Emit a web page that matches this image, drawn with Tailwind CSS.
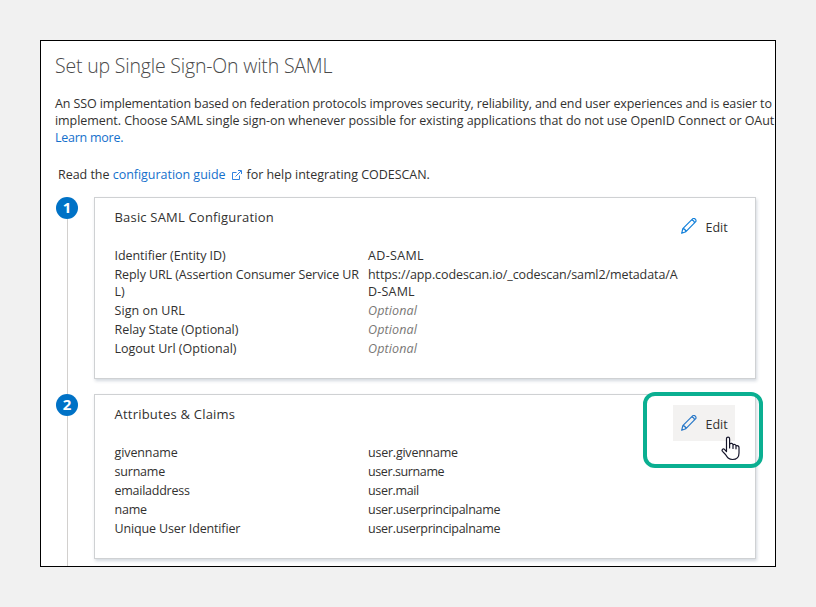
<!DOCTYPE html>
<html lang="en">
<head>
<meta charset="utf-8">
<title>Set up Single Sign-On with SAML</title>
<script src="https://cdn.jsdelivr.net/npm/@tailwindcss/browser@4"></script>
</head>
<body class="bg-[#f1f1f1] w-[816px] h-[607px] overflow-hidden pl-10 pt-10 font-['Open_Sans','Noto_Sans',sans-serif] text-[12.5px] leading-[17px] text-[#323130]">
<main class="relative w-[736px] h-[527px] bg-white border border-black overflow-hidden pl-[14px] pt-[11px]">
  <h1 class="h-[28px] leading-[28px] text-[19.5px] font-light text-[#4a4a4a] whitespace-nowrap tracking-[-0.19px]">Set up Single Sign-On with SAML</h1>
  <div class="mt-[15px] whitespace-nowrap">
    <div class="tracking-[-0.12px]">An SSO implementation based on federation protocols improves security, reliability, and end user experiences and is easier to</div>
    <div class="tracking-[-0.055px]">implement. Choose SAML single sign-on whenever possible for existing applications that do not use OpenID Connect or OAut</div>
    <div class="tracking-[-0.25px]"><a class="text-[#1570cc]">Learn more.</a></div>
  </div>
  <p class="mt-5 pl-[3px] flex items-center whitespace-nowrap tracking-[-0.03px]">
    <span>Read the&nbsp;</span><a class="text-[#1570cc]">configuration guide</a>
    <svg class="w-[10px] h-[10px] ml-[6px] mr-[5px]" viewBox="0 0 10 10" fill="none" stroke="#3183e0" stroke-width="1"><path d="M4.500 2.500h-4v7h7v-4M3.500 6.500L9 1M6 .5h3.500V4"/></svg>
    <span>for help integrating CODESCAN.</span>
  </p>

  <section class="flex mt-[14px]">
    <div class="w-[22px] ml-[1px] mr-[16px] h-[197px] flex flex-col items-center">
      <div class="size-[22px] rounded-full bg-[#0072c6] text-white font-bold text-[15px] leading-[21px] text-center shrink-0">1</div>
      <div class="w-px grow bg-[#d2d0ce]"></div>
    </div>
    <div class="w-[662px] h-[182px] border border-[#cfd1d3] shadow-[1px_2px_3px_rgba(60,80,110,0.22)] flex pl-[19.5px] pt-[11px]">
      <div class="w-[566px]">
        <h2 class="text-[13px] tracking-[0.19px]">Basic SAML Configuration</h2>
        <dl class="mt-[21px] grid grid-cols-[253.5px_1fr] gap-y-[2px] whitespace-nowrap">
          <dt class="tracking-[-0.05px]">Identifier (Entity ID)</dt><dd class="tracking-[0.33px]">AD-SAML</dd>
          <dt class="tracking-[-0.1px]">Reply URL (Assertion Consumer Service UR<br>L)</dt><dd class="tracking-[-0.09px]">https://app.codescan.io/_codescan/saml2/metadata/A<br><span class="tracking-[0.2px]">D-SAML</span></dd>
          <dt class="tracking-[0.07px]">Sign on URL</dt><dd class="italic text-[#797775] tracking-[0.12px]">Optional</dd>
          <dt class="tracking-[-0.05px]">Relay State (Optional)</dt><dd class="italic text-[#797775] tracking-[0.12px]">Optional</dd>
          <dt>Logout Url (Optional)</dt><dd class="italic text-[#797775] tracking-[0.12px]">Optional</dd>
        </dl>
      </div>
      <button class="w-[62px] h-[36px] -ml-[8px] -mt-[1px] flex items-center pl-[8px] gap-[9px]">
        <svg class="size-4" viewBox="0 0 16 16" fill="none" stroke="#1380da" stroke-width="1.2" stroke-linejoin="round"><path d="M.7 15.300l1.100-4.600L11.600.9c.8-.7 1.900-.5 2.700.2s1 2 .2 2.800L4.900 13.700.7 15.300zM1.800 10.700c1.700.1 2.800 1.200 3.100 3M10.500 2c1.700.1 2.800 1.200 3 2.900"/></svg>
        <span class="pt-[2px]">Edit</span>
      </button>
    </div>
  </section>

  <section class="flex">
    <div class="w-[22px] ml-[1px] mr-[16px] h-[190px] flex flex-col items-center">
      <div class="size-[22px] rounded-full bg-[#0072c6] text-white font-bold text-[15px] leading-[21px] text-center shrink-0">2</div>
      <div class="w-px grow bg-[#d2d0ce]"></div>
    </div>
    <div class="w-[662px] h-[165px] border border-[#cfd1d3] shadow-[1px_2px_3px_rgba(60,80,110,0.22)] flex pl-[19.5px] pt-[11px]">
      <div class="w-[566px]">
        <h2 class="text-[13px] tracking-[0.22px]">Attributes &amp; Claims</h2>
        <dl class="mt-[21px] grid grid-cols-[253.5px_1fr] gap-y-[2px] whitespace-nowrap">
          <dt class="tracking-[-0.1px]">givenname</dt><dd class="tracking-[-0.23px]">user.givenname</dd>
          <dt class="tracking-[-0.2px]">surname</dt><dd class="tracking-[-0.4px]">user.surname</dd>
          <dt class="tracking-[-0.25px]">emailaddress</dt><dd class="tracking-[-0.33px]">user.mail</dd>
          <dt class="tracking-[-0.2px]">name</dt><dd class="tracking-[-0.28px]">user.userprincipalname</dd>
          <dt class="tracking-[-0.14px]">Unique User Identifier</dt><dd class="tracking-[-0.28px]">user.userprincipalname</dd>
        </dl>
      </div>
      <button class="w-[62px] h-[36px] -ml-[8px] -mt-[1px] flex items-center pl-[8px] gap-[9px] bg-[#f3f2f1]">
        <svg class="size-4" viewBox="0 0 16 16" fill="none" stroke="#2878c8" stroke-width="1.2" stroke-linejoin="round"><path d="M.7 15.300l1.100-4.600L11.600.9c.8-.7 1.900-.5 2.700.2s1 2 .2 2.800L4.900 13.700.7 15.300zM1.800 10.700c1.700.1 2.800 1.200 3.100 3M10.500 2c1.700.1 2.800 1.200 3 2.900"/></svg>
        <span class="pt-[2px]">Edit</span>
      </button>
    </div>
  </section>

  <div class="absolute left-[602px] top-[351px] w-[120px] h-[76px] border-4 border-[#0aaf91] rounded-[12px]"></div>
  <svg class="absolute left-[680px] top-[395px] w-[19px] h-[25px]" viewBox="0 0 19 25" fill="#fff" stroke="#15152a" stroke-width="1.2" stroke-linejoin="round" stroke-linecap="round"><path d="M5.500 15.500V2.800C5.500.5 8.600.5 8.600 2.800V8.200C9.500 6.800 12 7.200 12 9 13 7.800 15 8.500 15 10 16.300 9.200 18 10 18 11.500V17C18 21 15.500 23.500 11.500 23.500 7.500 23.500 6.500 21.500 4.500 18.500L1.500 15.300C.3 13.800 2 12.300 3.400 13.300ZM8.600 8.200V12M12 9V12.500M15 10V12.800"/></svg>
</main>
</body>
</html>
